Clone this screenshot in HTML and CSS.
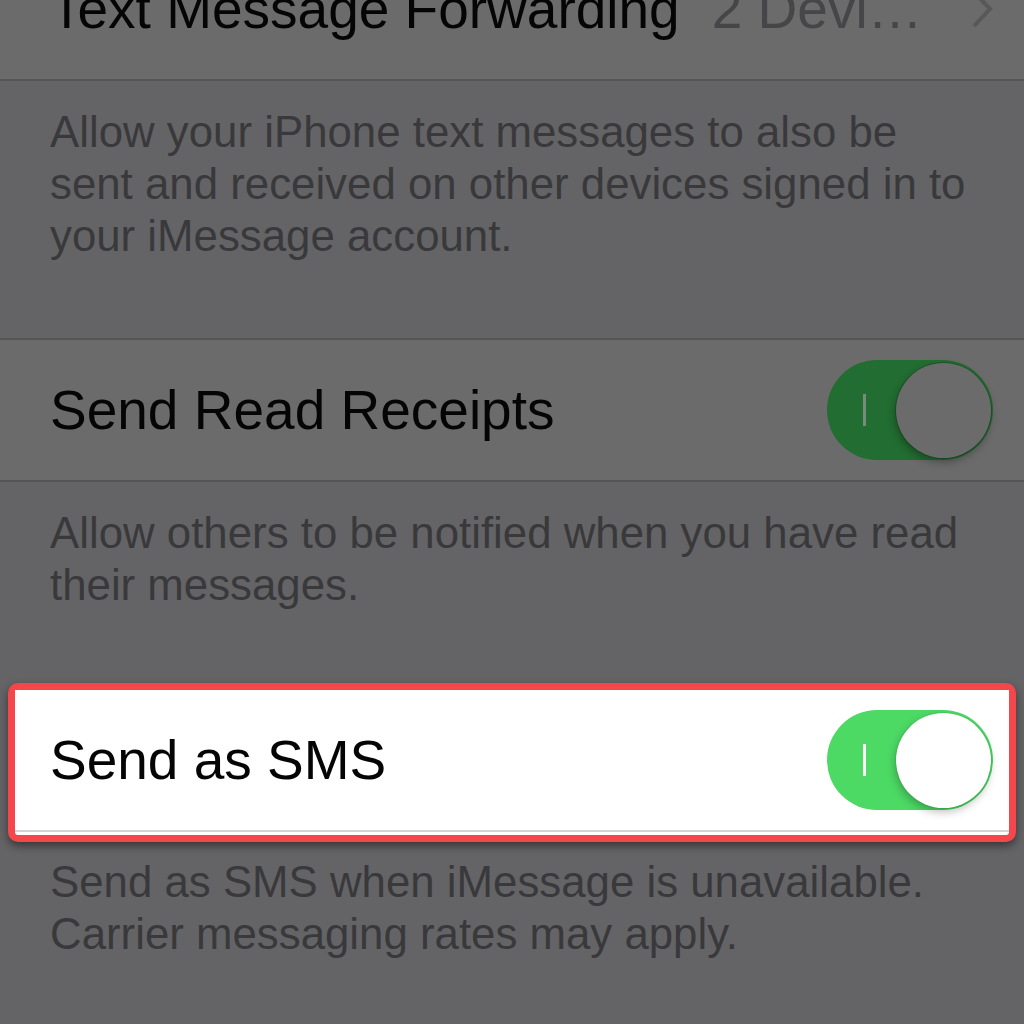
FILE: index.html
```html
<!DOCTYPE html>
<html lang="en">
<head>
    <meta charset="UTF-8">
    <title>Messages</title>
    <link rel="stylesheet" href="styles.css">
</head>
<body>
    <div class="settings">
        <div class="cell top">
            <span class="title">Text Message Forwarding</span>
            <span class="detail">2 Devi…</span>
            <svg class="chevron" width="22" height="40" viewBox="0 0 22 40"><path d="M3 3 L19 20 L3 37" fill="none" stroke="currentColor" stroke-width="4"/></svg>
        </div>
        <p class="footer first">Allow your iPhone text messages to also be<br>sent and received on other devices signed in to<br>your iMessage account.</p>

        <div class="cell">
            <span class="title">Send Read Receipts</span>
            <div class="switch dim"><span class="mark"></span><span class="knob"></span></div>
        </div>
        <p class="footer second">Allow others to be notified when you have read<br>their messages.</p>

        <div class="highlight">
            <div class="cell lit">
                <span class="title">Send as SMS</span>
                <div class="switch"><span class="mark"></span><span class="knob"></span></div>
            </div>
        </div>
        <p class="footer third">Send as SMS when iMessage is unavailable.<br>Carrier messaging rates may apply.</p>
    </div>
</body>
</html>
```

FILE: styles.css
```css
body { margin: 0; background: #646466; font-family: 'Liberation Sans', Arial, sans-serif; overflow: hidden; }
.settings { margin-top: -61px; }

.cell { height: 140px; display: flex; align-items: center; padding: 0 31px 0 50px; background: #6b6b6b; border-top: 2px solid #555556; border-bottom: 2px solid #555556; }
.cell.top { border-top: none; }
.title { font-size: 55px; color: #050505; white-space: nowrap; }
.detail { font-size: 55px; color: #464648; margin-left: 32px; white-space: nowrap; }
.chevron { margin-left: auto; margin-right: 0; color: #58585a; }

.footer { margin: 0; padding: 25px 50px 72px; font-size: 43.8px; line-height: 52px; color: #39393b; white-space: nowrap; }
.footer.first { padding-bottom: 76px; }
.footer.third { padding-top: 14px; }

.highlight { margin: 0 8px; border: 7px solid #f5464c; border-radius: 10px; background: #fff; padding-bottom: 3px; box-shadow: 0 4px 8px rgba(0, 0, 0, 0.45); }
.cell.lit { background: #fff; border-top: none; border-bottom: 2px solid #d4d3d8; padding: 0 16px 0 35px; }

.switch { margin-left: auto; width: 166px; height: 100px; border-radius: 50px; background: #4cd964; display: flex; align-items: center; justify-content: space-between; padding: 0 2px 0 36px; box-sizing: border-box; }
.mark { width: 3px; height: 32px; background: #fff; }
.knob { width: 95px; height: 95px; border-radius: 50%; background: #fff; box-shadow: -1px 4px 9px rgba(0, 0, 0, 0.25), 0 0 0 1px rgba(0, 0, 0, 0.05); }

.switch.dim { background: #226d31; }
.switch.dim .mark { background: #7a8a7d; }
.switch.dim .knob { background: #6b6b6b; box-shadow: -1px 4px 9px rgba(0, 0, 0, 0.3), 0 0 0 1px #1d5a29; }
```
